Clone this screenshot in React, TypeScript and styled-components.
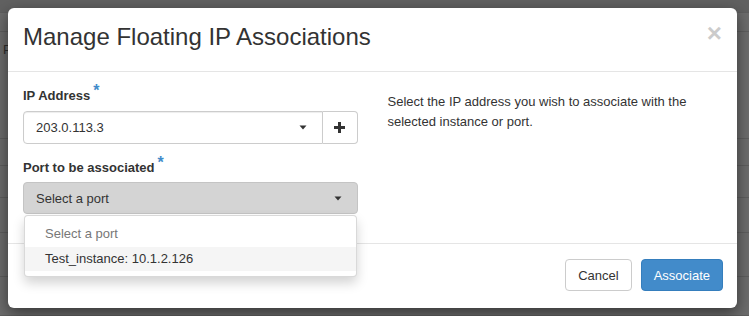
import React, { FC } from "react";
import styled, { createGlobalStyle } from "styled-components";

const GlobalStyle = createGlobalStyle`
    html, body {
        margin: 0;
        padding: 0;
    }
    body {
        font-family: "Liberation Sans", Arial, Helvetica, sans-serif;
        font-size: 13px;
        color: #333;
        overflow: hidden;
    }
    * {
        box-sizing: border-box;
    }
`;

interface IPort {
    label: string;
    placeholder?: boolean;
    active?: boolean;
}

const ports: IPort[] = [
    { label: "Select a port", placeholder: true },
    { label: "Test_instance: 10.1.2.126", active: true },
];

const Caret: FC = () => (
    <svg width="8" height="5" viewBox="0 0 8 5">
        <path d="M0.5 0.5 L7.5 0.5 L4 4.5 Z" fill="#333" />
    </svg>
);

const PlusIcon: FC = () => (
    <svg width="11" height="11" viewBox="0 0 11 11">
        <rect x="4" y="0" width="3" height="11" fill="#333" />
        <rect x="0" y="4" width="11" height="3" fill="#333" />
    </svg>
);

const App: FC = () => {
    return <>
        <GlobalStyle />
        <Page>
            <BgRow height={13} tone="#616161" />
            <BgRow height={19} />
            <BgRow height={107}>
                <BgText>P</BgText>
            </BgRow>
            <BgRow height={27} />
            <BgRow height={32} />
            <BgRow height={35} />
            <BgRow height={44} />
            <BgRow height={39} />

            <Modal>
                <Header>
                    <Close>×</Close>
                    <Title>Manage Floating IP Associations</Title>
                </Header>
                <Body>
                    <Column>
                        <FormGroup>
                            <Label>IP Address<Required>*</Required></Label>
                            <InputGroup>
                                <SelectBox>
                                    <span>203.0.113.3</span>
                                    <Caret />
                                </SelectBox>
                                <AddonButton><PlusIcon /></AddonButton>
                            </InputGroup>
                        </FormGroup>
                        <FormGroup>
                            <Label>Port to be associated<Required>*</Required></Label>
                            <Dropdown>
                                <Toggle>
                                    <span>Select a port</span>
                                    <Caret />
                                </Toggle>
                                <Menu>
                                    {ports.map(p => (
                                        <MenuItem key={p.label} placeholder={p.placeholder} active={p.active}>
                                            {p.label}
                                        </MenuItem>
                                    ))}
                                </Menu>
                            </Dropdown>
                        </FormGroup>
                    </Column>
                    <Column>
                        <Help>Select the IP address you wish to associate with the selected instance or port.</Help>
                    </Column>
                </Body>
                <Footer>
                    <Button>Cancel</Button>
                    <Button primary>Associate</Button>
                </Footer>
            </Modal>
        </Page>
    </>
}

const Page = styled.div`
    position: relative;
    width: 749px;
    height: 316px;
    overflow: hidden;
    background: #6c6c6c;
`

const BgRow = styled.div<{ height: number; tone?: string }>`
    height: ${p => p.height}px;
    background: ${p => p.tone || "transparent"};
    border-bottom: 1px solid #5e5e5e;
    padding: 10px 0 0 3px;
`

const BgText = styled.div`
    font-size: 13px;
    color: #2e2e2e;
`

const Modal = styled.div`
    position: absolute;
    top: 8px;
    left: 8px;
    width: 729px;
    height: 300px;
    background: #fff;
    border-radius: 6px;
    box-shadow: 0 5px 15px rgba(0, 0, 0, 0.5);
    display: flex;
    flex-direction: column;
`

const Header = styled.div`
    height: 64px;
    padding: 16px 15px 0;
    border-bottom: 1px solid #e5e5e5;
`

const Title = styled.h4`
    margin: 0;
    font-size: 24px;
    font-weight: normal;
    line-height: 1.1;
    color: #333;
`

const Close = styled.div`
    float: right;
    margin-top: -4px;
    font-size: 26px;
    font-weight: bold;
    line-height: 1;
    color: #000;
    opacity: 0.2;
`

const Body = styled.div`
    display: grid;
    grid-template-columns: 1fr 1fr;
    column-gap: 30px;
    padding: 15px 15px 0;
    height: 172px;
    border-bottom: 1px solid #e5e5e5;
`

const Column = styled.div`
    min-width: 0;
`

const FormGroup = styled.div`
    margin-bottom: 15px;
`

const Label = styled.label`
    display: block;
    margin-bottom: 5px;
    font-weight: bold;
    line-height: 18.5px;
`

const Required = styled.span`
    position: relative;
    top: -4px;
    margin-left: 3px;
    color: #428bca;
    font-size: 16px;
    line-height: 0;
`

const InputGroup = styled.div`
    display: flex;
    height: 33px;
`

const SelectBox = styled.div`
    flex: 1;
    display: flex;
    align-items: center;
    justify-content: space-between;
    padding: 0 15px 0 12px;
    border: 1px solid #ccc;
    border-radius: 4px 0 0 4px;
    box-shadow: inset 0 1px 1px rgba(0, 0, 0, 0.075);
`

const AddonButton = styled.div`
    width: 35px;
    display: flex;
    align-items: center;
    justify-content: center;
    border: 1px solid #ccc;
    border-left: none;
    border-radius: 0 4px 4px 0;
`

const Dropdown = styled.div`
    position: relative;
`

const Toggle = styled.div`
    height: 32px;
    display: flex;
    align-items: center;
    justify-content: space-between;
    padding: 0 15px 0 12px;
    background: #d4d4d4;
    border: 1px solid #c4c4c4;
    border-radius: 4px;
`

const Menu = styled.div`
    position: absolute;
    top: 100%;
    left: 1px;
    right: 1px;
    margin-top: 1px;
    padding: 5px 0;
    background: #fff;
    border: 1px solid rgba(0, 0, 0, 0.15);
    border-radius: 4px;
    box-shadow: 0 6px 12px rgba(0, 0, 0, 0.175);
    z-index: 2;
`

const MenuItem = styled.div<{ placeholder?: boolean; active?: boolean }>`
    padding: 0 20px;
    height: ${p => p.placeholder ? 26 : 24}px;
    line-height: ${p => p.placeholder ? 26 : 24}px;
    color: ${p => p.placeholder ? "#777" : "#333"};
    background: ${p => p.active ? "#f5f5f5" : "transparent"};
    white-space: nowrap;
`

const Help = styled.p`
    margin: 0;
    padding-top: 5px;
    line-height: 19.5px;
    color: #333;
`

const Footer = styled.div`
    display: flex;
    justify-content: flex-end;
    align-items: flex-start;
    gap: 9px;
    padding: 15px 14px 0;
`

const Button = styled.button<{ primary?: boolean }>`
    height: 32px;
    padding: 0 12px;
    font-family: inherit;
    font-size: 13px;
    border-radius: 4px;
    border: 1px solid ${p => p.primary ? "#357ebd" : "#ccc"};
    background: ${p => p.primary ? "#428bca" : "#fff"};
    color: ${p => p.primary ? "#fff" : "#333"};
`

export default App;
